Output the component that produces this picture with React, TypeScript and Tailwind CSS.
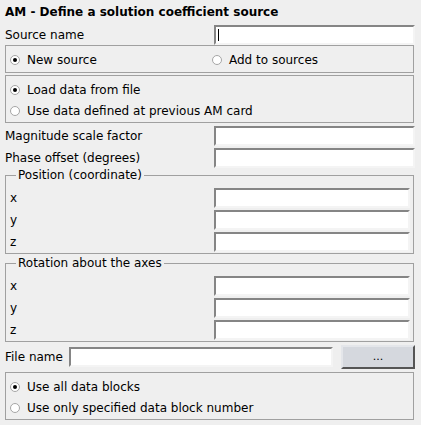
import React from "react";

const inputCls =
  "h-[20px] flex-1 bg-white border-2 border-t-[#858585] border-l-[#858585] border-r-[#f4f4f4] border-b-[#f4f4f4]";

const Radio = ({ checked, label }: { checked?: boolean; label: string }) => (
  <div className="flex h-[21px] items-center">
    <span className="flex h-[10px] w-[10px] items-center justify-center rounded-full border border-[#a6a6a6] bg-white">
      {checked && <span className="h-[4px] w-[4px] rounded-full bg-black" />}
    </span>
    <span className="ml-[7px]">{label}</span>
  </div>
);

const Field = ({ label }: { label: string }) => (
  <div className="flex h-[20px] items-center">
    <span className="w-[209px]">{label}</span>
    <div className={inputCls} />
  </div>
);

const Group = ({ legend, rows, mt }: { legend: string; rows: string[]; mt: string }) => (
  <fieldset className={`${mt} mr-[1px] border border-[#a0a0a0] pl-[3px] pr-[3px] pb-[1px]`}>
    <legend className="ml-[7px] px-[2px] leading-[14px]">{legend}</legend>
    <div className="flex flex-col gap-[2px] pt-[6px]">
      {rows.map((r) => (
        <div key={r} className="flex h-[20px] items-center">
          <span className="w-[205px] pl-[1px]">{r}</span>
          <div className={inputCls} />
        </div>
      ))}
    </div>
  </fieldset>
);

// engraved frame round a radio group
const Box = ({ children, className = "" }: { children: React.ReactNode; className?: string }) => (
  <div className={`mr-[1px] border border-[#a0a0a0] px-[4px] pt-[3px] ${className}`}>{children}</div>
);

export default function App() {
  return (
    <div
      className="flex h-[425px] w-[421px] flex-col bg-[#efefef] pl-[5px] pr-[6px] text-[12px] leading-[14px] text-black"
      style={{ fontFamily: '"DejaVu Sans", sans-serif' }}
    >
      <div className="flex h-[23px] items-center font-bold">AM - Define a solution coefficient source</div>

      <div className="mt-[2px] flex h-[20px] items-center">
        <span className="w-[209px]">Source name</span>
        <div className={`${inputCls} flex items-center`}>
          <span className="ml-[2px] h-[12px] w-[1px] bg-black" />
        </div>
      </div>

      <Box className="flex pb-[2px]">
        <div className="w-[202px]">
          <Radio checked label="New source" />
        </div>
        <Radio label="Add to sources" />
      </Box>

      <Box className="mt-[2px] pb-[1px]">
        <Radio checked label="Load data from file" />
        <Radio label="Use data defined at previous AM card" />
      </Box>

      <div className="mt-[3px] flex flex-col gap-[2px]">
        <Field label="Magnitude scale factor" />
        <Field label="Phase offset (degrees)" />
      </div>

      <Group mt="mt-0" legend="Position (coordinate)" rows={["x", "y", "z"]} />
      <Group mt="mt-[2px]" legend="Rotation about the axes" rows={["x", "y", "z"]} />

      <div className="mt-[3px] flex h-[24px] items-center">
        <span className="w-[64px]">File name</span>
        <div className={`${inputCls} mr-[8px]`} />
        <button className="h-[24px] w-[74px] border-2 border-t-[#e4e6ea] border-l-[#e4e6ea] border-r-[#555] border-b-[#555] bg-[#d5d8de] text-[11px]">
          ...
        </button>
      </div>

      <Box className="mt-[3px] pb-[1px]">
        <Radio checked label="Use all data blocks" />
        <Radio label="Use only specified data block number" />
      </Box>
    </div>
  );
}
